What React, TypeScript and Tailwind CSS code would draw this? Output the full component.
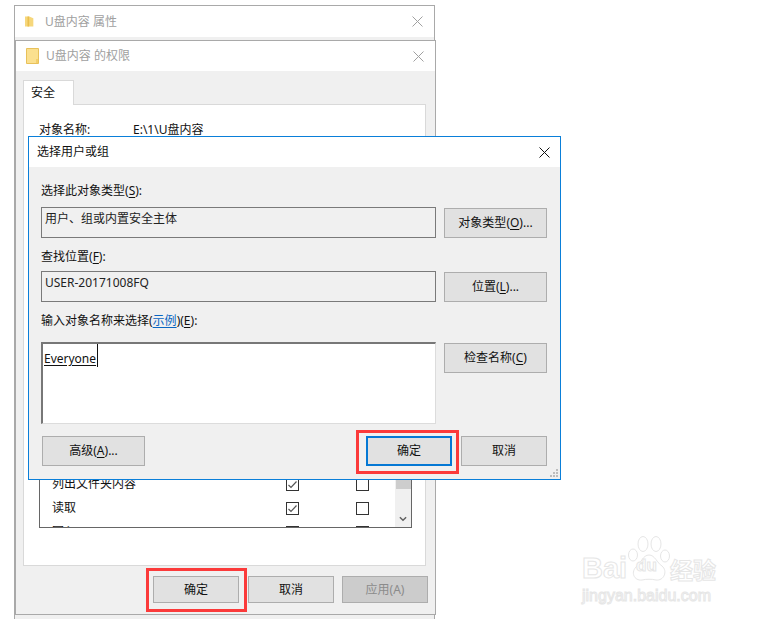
const FONT = "font-['Noto_Sans','Noto_Sans_CJK_SC',sans-serif]";

function CloseIcon({ className }: { className: string }) {
  return (
    <svg viewBox="0 0 11 11" className={className} fill="none" stroke="currentColor" strokeWidth="1">
      <path d="M0.5 0.5 L10.5 10.5 M10.5 0.5 L0.5 10.5" />
    </svg>
  );
}

function Key({ children }: { children: string }) {
  return (
    <>
      (<span className="underline underline-offset-2">{children}</span>)
    </>
  );
}

function Btn({
  children,
  className = 'w-[103px] h-[30px] border border-[#adadad]',
}: {
  children: React.ReactNode;
  className?: string;
}) {
  return (
    <div
      className={`flex items-center justify-center bg-[#e1e1e1] text-[12px] text-[#111] shrink-0 ${className}`}
    >
      <span>{children}</span>
    </div>
  );
}

function Check({ checked }: { checked?: boolean }) {
  return (
    <div className="w-[13px] h-[13px] border border-[#333] bg-white flex items-center justify-center">
      {checked && (
        <svg viewBox="0 0 11 11" className="w-[11px] h-[11px]" fill="none" stroke="#555" strokeWidth="1.2">
          <path d="M1.5 6 L4 8.5 L9.5 2.5" />
        </svg>
      )}
    </div>
  );
}

function PermRow({ label }: { label: string }) {
  return (
    <div className="flex items-center h-6 shrink-0 text-[12px] text-[#111]">
      <span className="w-[246px] pl-3">{label}</span>
      <Check checked />
      <div className="w-[57px]" />
      <Check />
    </div>
  );
}

function BackWindow() {
  return (
    <div className="absolute left-[14px] top-[5px] w-[421px] h-[640px] border border-[#a9a9a9] bg-[#f0f0f0]">
      <div className="h-[31px] bg-white flex items-center pl-[10px] pr-[11px] text-[12px] text-[#a0a0a0]">
        <svg viewBox="0 0 12 14" className="w-[10px] h-[13px] mr-[10px]">
          <path d="M0 1 H5 L10 3 V13 H0 Z" fill="#f6d77c" />
          <path d="M3 1 H5 V13 H3 Z" fill="#eabf4e" />
        </svg>
        <span className="flex-1">U盘内容 属性</span>
        <CloseIcon className="w-[11px] h-[11px]" />
      </div>
    </div>
  );
}

function PermissionWindow() {
  return (
    <div className="absolute left-[15px] top-[40px] w-[421px] h-[575px] border border-[#a9a9a9] bg-[#f0f0f0] flex flex-col">
      <div className="h-[30px] bg-white flex items-center pl-[10px] pr-[11px] text-[12px] text-[#a0a0a0] shrink-0">
        <svg viewBox="0 0 13 16" className="w-[13px] h-[16px] mr-[7px]">
          <path d="M0.5 0.5 H12.5 V15.5 H0.5 Z" fill="#fbe08f" stroke="#e8c15a" />
          <path d="M10 11 H12 V15 H10 Z" fill="#f3cf6a" />
        </svg>
        <span className="flex-1">U盘内容 的权限</span>
        <CloseIcon className="w-[11px] h-[11px]" />
      </div>
      <div className="flex-1 flex flex-col pl-[7px] pr-[7px] pt-[9px]">
        <div className="w-[51px] h-[25px] -mb-px z-10 bg-white border border-[#d9d9d9] border-b-0 flex items-center pl-[7px] text-[12px] text-[#111]">
          安全
        </div>
        <div className="w-[403px] h-[462px] bg-white border border-[#d9d9d9] flex flex-col pl-[15px] pr-[13px] pt-[15px] pb-[37px]">
          <div className="flex text-[12px] text-[#111] h-[20px] items-center">
            <span className="w-[94px]">对象名称:</span>
            <span>E:\1\U盘内容</span>
          </div>
          <div className="flex-1" />
          <div className="h-[70px] border border-[#666] border-t-0 flex overflow-hidden">
            <div className="flex-1 flex flex-col justify-end -mb-[17px]">
              <PermRow label="列出文件夹内容" />
              <PermRow label="读取" />
              <PermRow label="写入" />
            </div>
            <div className="w-[16px] bg-[#f0f0f0] flex flex-col items-center">
              <div className="w-[15px] h-[31px] bg-[#cdcdcd]" />
              <svg viewBox="0 0 9 6" className="w-[8px] h-[6px] mt-[27px]" fill="none" stroke="#606060" strokeWidth="1.6">
                <path d="M1 1 L4.5 4.5 L8 1" />
              </svg>
            </div>
          </div>
        </div>
        <div className="flex justify-end gap-[8px] mt-[10px]">
          <div className="relative mr-px">
            <Btn className="w-[86px] h-[27px] border border-[#adadad]">确定</Btn>
            <div className="absolute -left-[7px] -top-[8px] w-[101px] h-[44px] border-[3px] border-[#fb3a3a]" />
          </div>
          <Btn className="w-[86px] h-[27px] border border-[#adadad]">取消</Btn>
          <Btn className="w-[86px] h-[27px] border border-[#adadad] !bg-[#cccccc] !text-[#8b8b8b]">
            应用(A)
          </Btn>
        </div>
      </div>
    </div>
  );
}

function ReadonlyBox({ children }: { children: string }) {
  return (
    <div className="h-[31px] border border-[#7a7a7a] pl-[3px] pt-[2px] text-[12px] leading-[17px] text-[#222]">
      {children}
    </div>
  );
}

function SelectDialog() {
  return (
    <div className="absolute left-[28px] top-[136px] w-[533px] h-[344px] border border-[#0a7fd9] bg-[#f0f0f0] flex flex-col text-[12px] text-[#111]">
      <div className="h-[30px] bg-white flex items-center pl-[8px] pr-[10px] shrink-0">
        <span className="flex-1">选择用户或组</span>
        <CloseIcon className="w-[11px] h-[11px] text-[#111]" />
      </div>
      <div className="relative flex-1 pl-[12px] pr-[13px] flex flex-col">
        <div className="h-[17px] mt-[15px] leading-[17px]">
          选择此对象类型<Key>S</Key>:
        </div>
        <div className="grid grid-cols-[395px_103px] gap-x-[8px] mt-[8px] items-center">
          <ReadonlyBox>用户、组或内置安全主体</ReadonlyBox>
          <Btn>
            对象类型<Key>O</Key>...
          </Btn>
        </div>
        <div className="h-[17px] mt-[10px] leading-[17px]">
          查找位置<Key>F</Key>:
        </div>
        <div className="grid grid-cols-[395px_103px] gap-x-[8px] mt-[6px] items-center">
          <ReadonlyBox>USER-20171008FQ</ReadonlyBox>
          <Btn>
            位置<Key>L</Key>...
          </Btn>
        </div>
        <div className="h-[17px] mt-[10px] leading-[17px]">
          输入对象名称来选择(<span className="text-[#0a66c2] underline underline-offset-2">示例</span>)<Key>E</Key>:
        </div>
        <div className="grid grid-cols-[395px_103px] gap-x-[8px] mt-[13px] items-start">
          <div className="h-[82px] bg-white border-t-2 border-l-2 border-[#777] border-r border-b border-r-[#dcdcdc] border-b-[#dcdcdc] pt-[6px] pl-px leading-[17px] text-[#111]">
            <span className="relative underline underline-offset-2">
              Everyone
              <span className="absolute -right-[2px] -top-[6px] w-px h-[23px] bg-[#111]" />
            </span>
          </div>
          <Btn className="w-[103px] h-[30px] mt-px border border-[#adadad]">
            检查名称<Key>C</Key>
          </Btn>
        </div>
        <div className="flex items-center mt-[12px] pl-px">
          <Btn>
            高级<Key>A</Key>...
          </Btn>
          <div className="relative ml-[221px]">
            <Btn className="w-[86px] h-[30px] border-2 border-[#0578d4]">确定</Btn>
            <div className="absolute -left-[10px] -top-[6px] w-[103px] h-[44px] border-[3px] border-[#fb3a3a]" />
          </div>
          <Btn className="w-[86px] h-[30px] ml-[9px] border border-[#adadad]">取消</Btn>
        </div>
        <svg viewBox="0 0 9 9" className="absolute right-[1px] bottom-[1px] w-[9px] h-[9px]" fill="#bdbdbd">
          <rect x="6" y="0" width="2" height="2" />
          <rect x="3" y="3" width="2" height="2" />
          <rect x="6" y="3" width="2" height="2" />
          <rect x="0" y="6" width="2" height="2" />
          <rect x="3" y="6" width="2" height="2" />
          <rect x="6" y="6" width="2" height="2" />
        </svg>
      </div>
    </div>
  );
}

function Watermark() {
  return (
    <div className="absolute left-[582px] top-[535px] w-[140px] h-[70px] text-white [-webkit-text-stroke:1px_#e6e6e6]">
      <span className="absolute left-0 top-[16px] text-[29px] leading-[34px] font-['Liberation_Sans',sans-serif] font-bold">
        Bai
      </span>
      <svg viewBox="0 0 46 48" className="absolute left-[43px] top-0 w-[46px] h-[48px]" fill="#fff" stroke="#e6e6e6" strokeWidth="1">
        <ellipse cx="8" cy="20" rx="4.5" ry="6" />
        <ellipse cx="18" cy="9" rx="5" ry="7.5" />
        <ellipse cx="31" cy="9" rx="5" ry="7.5" />
        <ellipse cx="40" cy="21" rx="4.5" ry="6" />
        <path d="M24 20 C30 20 32 28 37 31 C43 36 39 46 31 45 C27 44 21 44 17 45 C9 46 5 37 12 31 C16 28 18 20 24 20 Z" />
      </svg>
      <span className="absolute left-[54px] top-[21px] text-[17px] leading-[20px] font-['Liberation_Sans',sans-serif] font-bold">
        du
      </span>
      <span className="absolute left-[88px] top-[21px] text-[23px] leading-[26px] font-['Noto_Sans_CJK_SC',sans-serif] font-bold whitespace-nowrap">
        经验
      </span>
      <span className="absolute left-0 top-[51px] text-[16px] leading-[19px] font-['Liberation_Sans',sans-serif] whitespace-nowrap">
        jingyan.baidu.com
      </span>
    </div>
  );
}

export default function App() {
  return (
    <div className={`relative w-[760px] h-[619px] overflow-hidden bg-white ${FONT}`}>
      <BackWindow />
      <PermissionWindow />
      <SelectDialog />
      <Watermark />
    </div>
  );
}
